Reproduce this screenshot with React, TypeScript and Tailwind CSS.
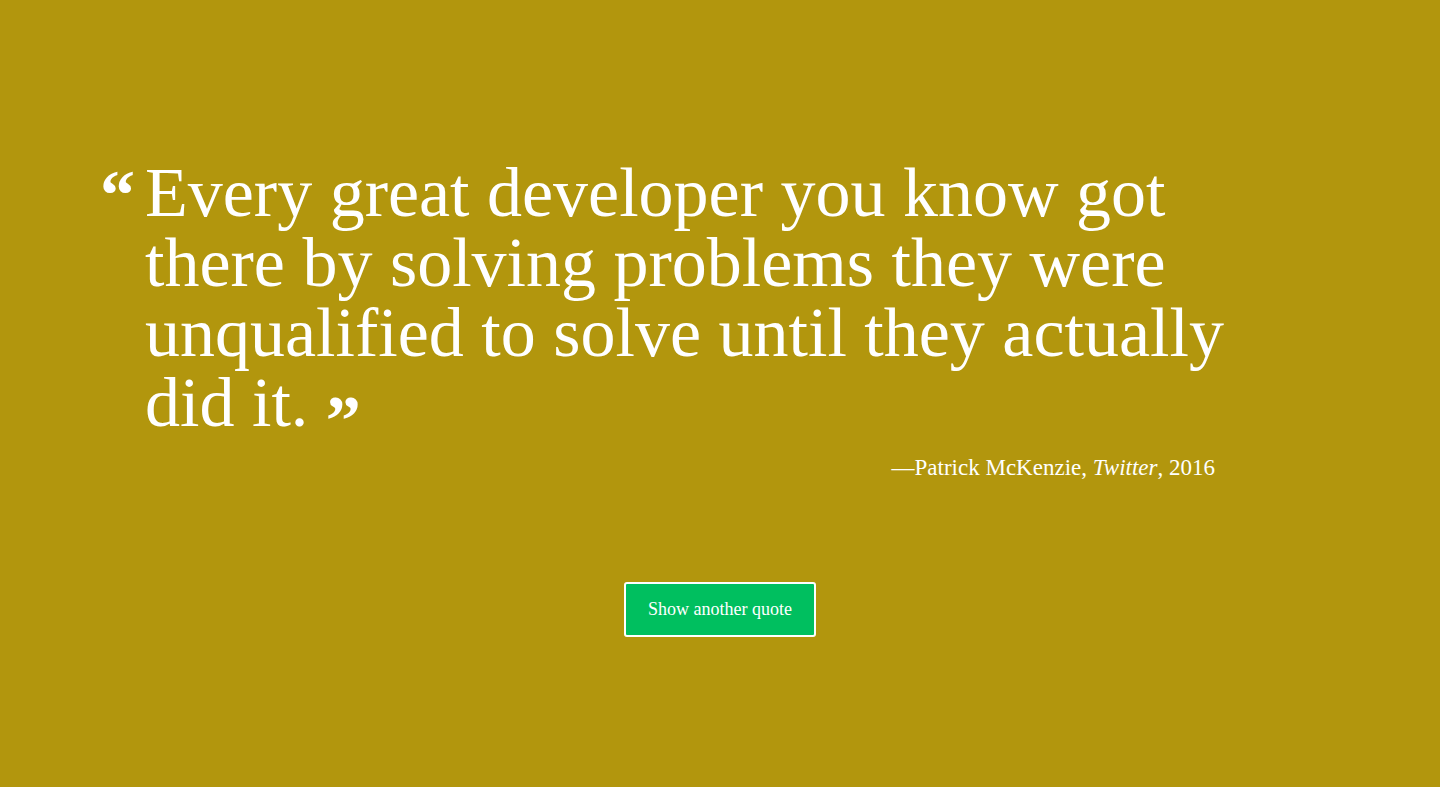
const quote = {
  text: "Every great developer you know got there by solving problems they were unqualified to solve until they actually did it.",
  author: "Patrick McKenzie",
  source: "Twitter",
  year: "2016",
};

const App = () => {
  return (
    <div className="min-h-screen w-full bg-[#b2960d] text-white font-['Liberation_Serif',_'Times_New_Roman',serif]">
      <div className="mx-auto w-[1240px] pt-[158px]">
        <blockquote className="flex">
          <span className="w-[45px] shrink-0 pt-[2px] text-[70px] leading-[70px] font-bold">&ldquo;</span>
          <div className="w-[1100px]">
            <p className="text-[70px] leading-[70px]">
              {quote.text}{" "}
              <span className="align-[-18px] font-bold text-[70px] leading-[0]">&rdquo;</span>
            </p>
            <p className="mt-[15px] mr-[30px] text-right text-[23px] leading-[30px]">
              &mdash;{quote.author}, <cite className="italic">{quote.source}</cite>, {quote.year}
            </p>
          </div>
        </blockquote>
        <div className="mt-[99px] flex justify-center">
          <button
            type="button"
            className="rounded-[3px] border-2 border-white bg-[#00bf5f] px-[22px] py-[14px] text-[18px] leading-[23px] text-white"
          >
            Show another quote
          </button>
        </div>
      </div>
    </div>
  );
};

export default App;
